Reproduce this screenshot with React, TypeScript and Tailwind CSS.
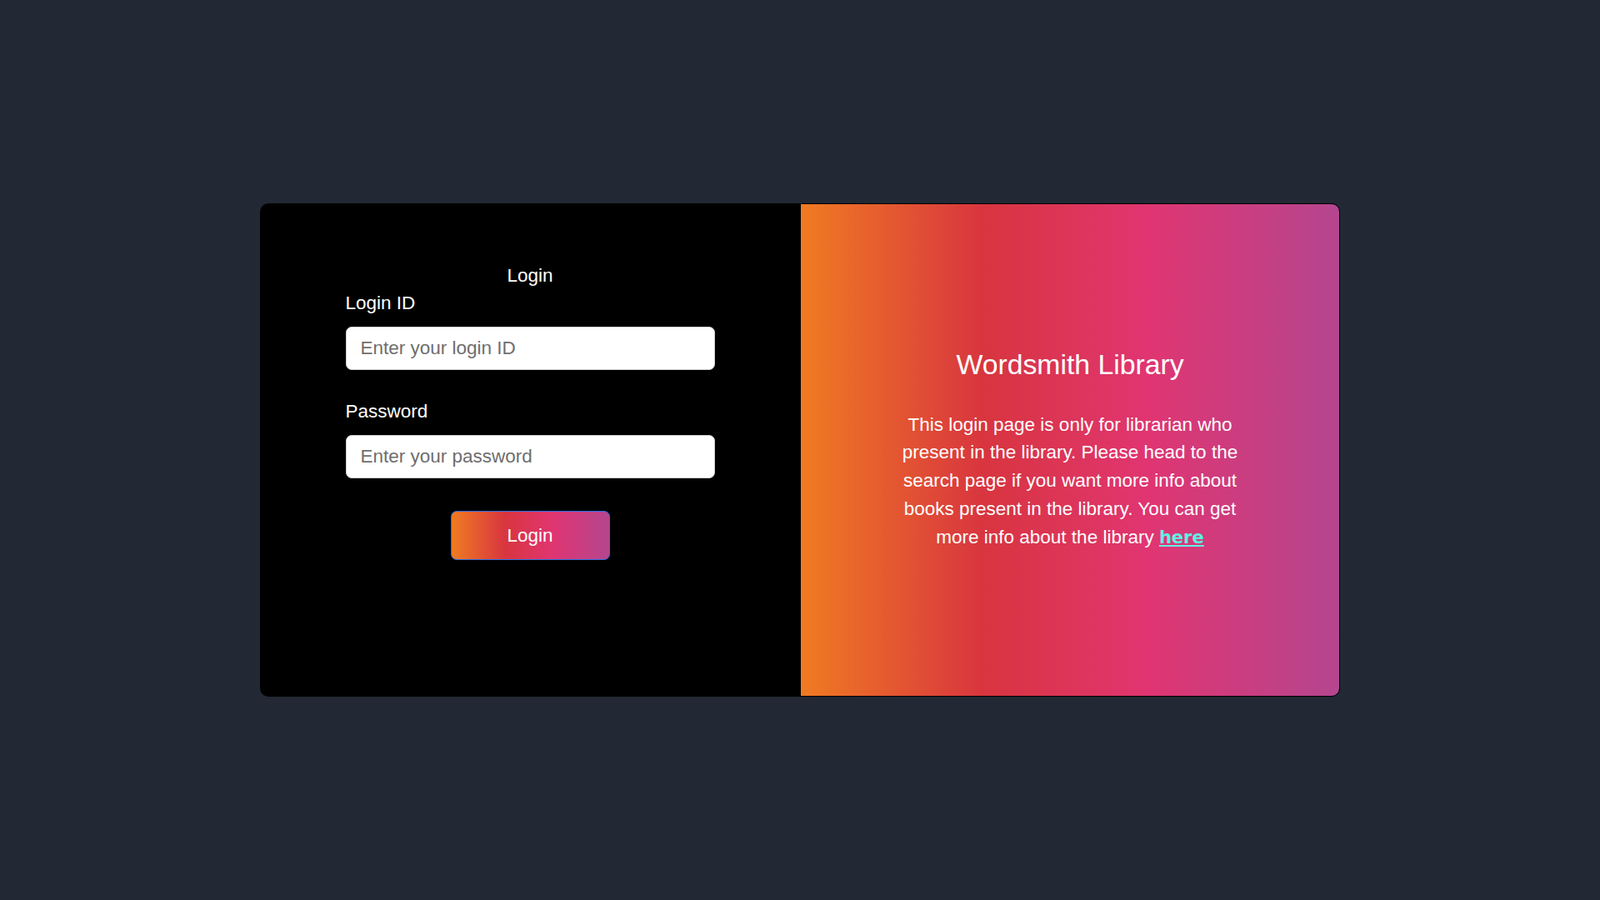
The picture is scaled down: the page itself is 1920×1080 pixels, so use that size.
const gradient =
  "bg-[linear-gradient(to_right,#f07b22_0%,#d8353f_34%,#e03571_64%,#b4468f_100%)]";

const Field = ({
  label,
  placeholder,
  type,
  className,
}: {
  label: string;
  placeholder: string;
  type: string;
  className?: string;
}) => {
  return (
    <div className={className}>
      <label className="block text-[22.5px] leading-[26px] text-white">{label}</label>
      <input
        type={type}
        placeholder={placeholder}
        className="mt-[15px] h-[52px] w-full rounded-[7px] border border-[#cfcfcf] bg-white pl-[17px] text-[22.5px] text-black outline-none placeholder:text-[#6e6e6e]"
      />
    </div>
  );
};

const App = () => {
  return (
    <div
      className="flex h-screen w-full items-center justify-center bg-[#222834]"
      style={{ fontFamily: '"Liberation Sans", Arial, sans-serif' }}
    >
      <div className="flex h-[592px] w-[1296px] overflow-hidden rounded-[10px] bg-black">
        <div className="flex w-1/2 flex-col items-center pt-[74px]">
          <div className="w-[443px]">
            <h2 className="text-center text-[22.5px] leading-[26px] text-white">Login</h2>
            <Field className="mt-[7px]" label="Login ID" placeholder="Enter your login ID" type="text" />
            <Field
              className="mt-[37px]"
              label="Password"
              placeholder="Enter your password"
              type="password"
            />
            <div className="mt-[39px] flex justify-center">
              <button
                className={`h-[59px] w-[191px] rounded-[7px] border border-[#2b6fe0] text-[22.5px] text-white ${gradient}`}
              >
                Login
              </button>
            </div>
          </div>
        </div>

        <div
          className={`flex w-1/2 flex-col items-center justify-center rounded-r-[10px] border border-black ${gradient}`}
        >
          <h1 className="text-[33.75px] leading-[39px] text-white">Wordsmith Library</h1>
          <p className="mt-[36px] w-[420px] text-center text-[22.5px] leading-[33.75px] text-white">
            This login page is only for librarian who present in the library. Please head to the
            search page if you want more info about books present in the library. You can get more
            info about the library{" "}
            <a
              href="#"
              className="text-[21px] font-bold text-[#5ef2e4] underline"
              style={{ fontFamily: '"DejaVu Sans", sans-serif' }}
            >
              here
            </a>
          </p>
        </div>
      </div>
    </div>
  );
};

export default App;
